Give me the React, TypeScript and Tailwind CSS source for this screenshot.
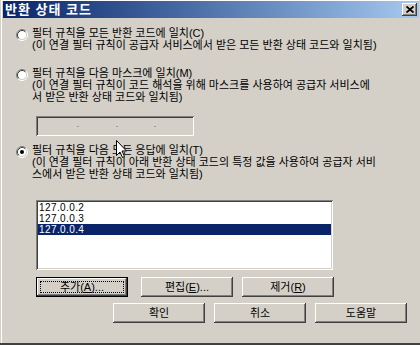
import React from "react";

const raised =
  "shadow-[inset_-1px_-1px_#404040,inset_1px_1px_#ffffff,inset_-2px_-2px_#808080,inset_2px_2px_#d4d0c8]";
const sunken =
  "shadow-[inset_1px_1px_#808080,inset_-1px_-1px_#ffffff,inset_2px_2px_#404040,inset_-2px_-2px_#d4d0c8]";

function Radio({ checked }: { checked?: boolean }) {
  return (
    <svg width="12" height="12" viewBox="0 0 12 12" className="shrink-0 mt-[2px]">
      <circle cx="6" cy="6" r="4.5" fill="#ffffff" />
      <path d="M2.11 9.89 A5.5 5.5 0 0 1 9.89 2.11" stroke="#808080" strokeWidth="1" fill="none" />
      <path d="M9.89 2.11 A5.5 5.5 0 0 1 2.11 9.89" stroke="#ffffff" strokeWidth="1" fill="none" />
      <path d="M2.82 9.18 A4.5 4.5 0 0 1 9.18 2.82" stroke="#404040" strokeWidth="1" fill="none" />
      <path d="M9.18 2.82 A4.5 4.5 0 0 1 2.82 9.18" stroke="#d4d0c8" strokeWidth="1" fill="none" />
      {checked && <circle cx="6" cy="6" r="2" fill="#000000" />}
    </svg>
  );
}

function Btn({
  children,
  className = "",
  isDefault,
}: {
  children: React.ReactNode;
  className?: string;
  isDefault?: boolean;
}) {
  if (isDefault) {
    return (
      <div className={`h-[20px] w-[92px] border border-black bg-[#d4d0c8] ${className}`}>
        <div className={`h-full w-full ${raised} flex items-center justify-center p-[3px]`}>
          <div className="w-full h-full border border-dotted border-black flex items-center justify-center">
            {children}
          </div>
        </div>
      </div>
    );
  }
  return (
    <div className={`h-[20px] w-[92px] bg-[#d4d0c8] ${raised} flex items-center justify-center ${className}`}>
      {children}
    </div>
  );
}

export default function App() {
  return (
    <div className="relative w-[420px] h-[345px] bg-[#d4d0c8] font-['Liberation_Sans','Noto_Sans_CJK_KR',sans-serif] text-[11px] leading-[12px] text-black overflow-hidden">
      <div className="w-full h-full pl-px pr-px">
        <div className="w-full h-full border-t border-l border-white border-b border-b-[#808080] flex flex-col">
          {/* Title bar */}
          <div className="ml-[1px] h-[17px] bg-linear-to-r from-[#0a246a] to-[#a6caf0] flex items-center justify-between pl-[2px] pr-[2px]">
            <span className="text-white font-bold text-[13px] leading-[17px] tracking-[1px]">반환 상태 코드</span>
            <div className={`w-[15px] h-[13px] bg-[#d4d0c8] ${raised} flex items-center justify-center`}>
              <svg width="8" height="7" viewBox="0 0 8 7">
                <path d="M0.5 0.5 L7.5 6.5 M7.5 0.5 L0.5 6.5" stroke="#000" strokeWidth="1.8" />
              </svg>
            </div>
          </div>

          <div className="flex flex-col pl-[14px]">
            {/* Option 1 */}
            <div className="mt-[9px] flex gap-[4px]">
              <Radio />
              <div>
                <div>필터 규칙을 모든 반환 코드에 일치(C)</div>
                <div>(이 연결 필터 규칙이 공급자 서비스에서 받은 모든 반환 상태 코드와 일치됨)</div>
              </div>
            </div>

            {/* Option 2 */}
            <div className="mt-[16px] flex gap-[4px]">
              <Radio />
              <div>
                <div>필터 규칙을 다음 마스크에 일치(M)</div>
                <div>(이 연결 필터 규칙이 코드 해석을 위해 마스크를 사용하여 공급자 서비스에</div>
                <div>서 받은 반환 상태 코드와 일치됨)</div>
              </div>
            </div>

            {/* Mask box (disabled) */}
            <div className={`mt-[13px] ml-[20px] w-[158px] h-[20px] bg-[#d4d0c8] ${sunken} flex items-center`}>
              <span className="ml-[41px] w-[2px] h-px bg-[#9a9a9a]" />
              <span className="ml-[37px] w-[2px] h-px bg-[#9a9a9a]" />
              <span className="ml-[36px] w-[2px] h-px bg-[#9a9a9a]" />
            </div>

            {/* Option 3 */}
            <div className="mt-[8px] flex gap-[4px]">
              <Radio checked />
              <div>
                <div>필터 규칙을 다음 모든 응답에 일치(T)</div>
                <div>(이 연결 필터 규칙이 아래 반환 상태 코드의 특정 값을 사용하여 공급자 서비</div>
                <div>스에서 받은 반환 상태 코드와 일치됨)</div>
              </div>
            </div>

            {/* List box */}
            <div className={`mt-[20px] ml-[20px] w-[297px] h-[70px] bg-white ${sunken} p-[2px] flex flex-col text-[10px] tracking-[0.4px]`}>
              <div className="h-[11px] leading-[11px] pl-[1px]">127.0.0.2</div>
              <div className="h-[11px] leading-[11px] pl-[1px]">127.0.0.3</div>
              <div className="h-[11px] leading-[11px] pl-[1px] bg-[#0a246a] text-white">127.0.0.4</div>
            </div>

            {/* Buttons row 1 */}
            <div className="mt-[7px] ml-[20px] flex">
              <Btn isDefault>
                추가(<span className="underline">A</span>)...
              </Btn>
              <Btn className="ml-[13px]">
                편집(<span className="underline">E</span>)...
              </Btn>
              <Btn className="ml-[9px]">
                제거(<span className="underline">R</span>)
              </Btn>
            </div>

            {/* Buttons row 2 */}
            <div className="mt-[6px] ml-[97px] flex">
              <Btn>확인</Btn>
              <Btn className="ml-[9px]">취소</Btn>
              <Btn className="ml-[9px]">도움말</Btn>
            </div>
          </div>
        </div>
      </div>
      <div className="absolute left-0 right-0 bottom-0 h-[2px] bg-[#404040]" />

      {/* Mouse cursor */}
      <svg className="absolute left-[116px] top-[140px]" width="12" height="19" viewBox="0 0 12 19">
        <path d="M0.5 0.5 L0.5 15.5 L4 12 L6.5 17.5 L8.5 16.5 L6 11 L10.5 11 Z" fill="#ffffff" stroke="#000000" strokeWidth="1" />
      </svg>
    </div>
  );
}
